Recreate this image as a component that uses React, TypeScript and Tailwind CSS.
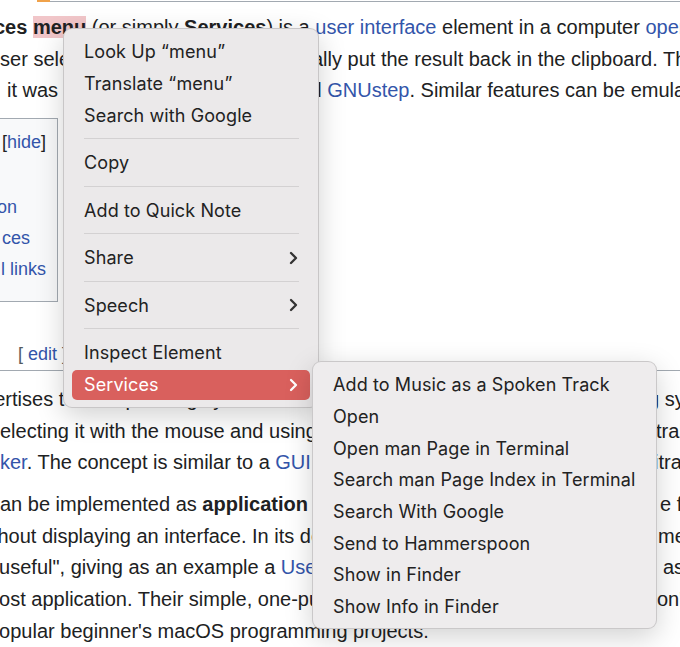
import type { ReactNode } from "react";

function A({ children }: { children: ReactNode }) {
  return <span className="text-[#3355aa]">{children}</span>;
}

function Chevron({ className = "" }: { className?: string }) {
  return (
    <svg width="9" height="14" viewBox="0 0 9 14" fill="none" className={className}>
      <path d="M2 2l5 5-5 5" stroke="currentColor" strokeWidth="2.3" strokeLinecap="round" strokeLinejoin="round" />
    </svg>
  );
}

function Item({ label, sub = false, active = false }: { label: string; sub?: boolean; active?: boolean }) {
  return (
    <div className="h-8 px-2 flex items-center">
      <div
        className={`flex-1 h-[30px] rounded-[5px] pl-[12px] pr-[12px] flex items-center justify-between ${
          active ? "bg-[#d9605d] text-white" : "text-[#222222]"
        }`}
      >
        <span>{label}</span>
        {sub && <Chevron className={active ? "text-white" : "text-[#333333]"} />}
      </div>
    </div>
  );
}

function Sep() {
  return (
    <div className="h-[15.5px] flex items-center pl-[20px] pr-[19px]">
      <div className="h-px flex-1 bg-[#d3d1d2]" />
    </div>
  );
}

function SubItem({ label }: { label: string }) {
  return <div className="h-[31.7px] flex items-center pl-[20px] text-[#222222] whitespace-nowrap">{label}</div>;
}

const line = "h-[31.6px] leading-[31.6px] whitespace-nowrap flex";

export default function App() {
  return (
    <div className="relative w-[680px] h-[647px] overflow-hidden bg-white text-[#202122] text-[20px] font-['Liberation_Sans',Arial,sans-serif]">
      {/* page behind the menus */}
      <div className="flex h-[2px]">
        <div className="w-[37px]" />
        <div className="w-[13px] bg-[#f0a24a]" />
        <div className="flex-1 border-b border-[#a2a9b1]" />
      </div>

      <div className="mt-[10.2px]">
        <div className={line}>
          <div className="ml-[-6px]">
            <b>ces </b>
            <b className="bg-[#f1c6c9]">menu</b> (or simply <b>Services</b>) is a <A>user interface</A> element in a
            computer <A>operating system</A>
          </div>
        </div>
        <div className={line}>
          <div className="w-[312px] shrink-0 overflow-hidden">
            <div className="ml-[-11px]">user selects text</div>
          </div>
          <div>ally put the result back in the clipboard. The</div>
        </div>
        <div className={line}>
          <div className="w-[310.5px] shrink-0 overflow-hidden">
            <div className="pl-[7px]">it was</div>
          </div>
          <div>
            d <A>GNUstep</A>. Similar features can be emulated
          </div>
        </div>
      </div>

      <div className="mt-[11px] ml-[-10px] w-[68px] border border-[#a2a9b1] bg-[#f8f9fa] pt-[8.5px] pb-[15.5px] text-[18px] whitespace-nowrap text-right">
        <div className="h-[31px] leading-[31px] pr-[11px]">
          [<A>hide</A>]
        </div>
        <div className="mt-[3px] text-[#3355aa]">
          <div className="h-[31px] leading-[31px]" />
          <div className="h-[31px] leading-[31px] pr-[40px]">on</div>
          <div className="h-[31px] leading-[31px] pr-[27px]">ces</div>
          <div className="h-[31px] leading-[31px] pr-[11px]">l links</div>
        </div>
      </div>

      <div className="mt-[37.5px] h-[32px] border-b border-[#a2a9b1] flex items-center pl-[18px] text-[18px] text-[#54595d]">
        [ <A>&nbsp;edit&nbsp;</A> ]
      </div>

      <div className="mt-[12.7px]">
        <div className={line}>
          <div className="w-[648px] shrink-0 overflow-hidden">
            <div className="ml-[-38px]">advertises to the operating system the data types it can handle on the operatin</div>
          </div>
          <div>g system</div>
        </div>
        <div className={line}>
          <div className="w-[656px] shrink-0 overflow-hidden">
            <div className="ml-[-10px]">selecting it with the mouse and using a menu item in the cen</div>
          </div>
          <div>tral menu</div>
        </div>
        <div className={line}>
          <div className="w-[654px] shrink-0 overflow-hidden">
            <div>
              <A>ker</A>. The concept is similar to a <A>GUI</A> widget that handles arb
            </div>
          </div>
          <div>itrary</div>
        </div>
      </div>

      <div className="mt-[10.2px]">
        <div className={line}>
          <div className="w-[660px] shrink-0 overflow-hidden">
            <div className="ml-[-10px]">
              can be implemented as <b>application</b> services that run in the background
            </div>
          </div>
          <div>e functions</div>
        </div>
        <div className={line}>
          <div className="w-[658px] shrink-0 overflow-hidden">
            <div className="ml-[-27px]">without displaying an interface. In its documentation, Apple reco</div>
          </div>
          <div>mends</div>
        </div>
        <div className={line}>
          <div className="w-[663px] shrink-0 overflow-hidden">
            <div className="ml-[-8px]">
              "useful", giving as an example a <A>User</A> defaults service, such
            </div>
          </div>
          <div>as</div>
        </div>
        <div className={line}>
          <div className="w-[657px] shrink-0 overflow-hidden">
            <div className="ml-[-12px]">host application. Their simple, one-purpose nature means they d</div>
          </div>
          <div>on't</div>
        </div>
        <div className={line}>
          <div className="ml-[-12px]">popular beginner's macOS programming projects.</div>
        </div>
      </div>

      {/* context menu */}
      <div className="absolute left-[63px] top-[28px] w-[256px] rounded-[9px] bg-[#ebe9ea] border border-black/15 shadow-[0_8px_28px_rgba(0,0,0,0.18)] pt-[6px] pb-[6px] text-[18px] tracking-[0.1px] font-['Inter',sans-serif]">
        <Item label="Look Up “menu”" />
        <Item label="Translate “menu”" />
        <Item label="Search with Google" />
        <Sep />
        <Item label="Copy" />
        <Sep />
        <Item label="Add to Quick Note" />
        <Sep />
        <Item label="Share" sub />
        <Sep />
        <Item label="Speech" sub />
        <Sep />
        <Item label="Inspect Element" />
        <Item label="Services" sub active />
      </div>

      {/* services submenu */}
      <div className="absolute left-[312px] top-[361px] w-[345px] rounded-[9px] bg-[#eeeced] border border-black/15 shadow-[0_8px_28px_rgba(0,0,0,0.18)] pt-[7px] pb-[5px] text-[18px] tracking-[0.1px] font-['Inter',sans-serif]">
        <SubItem label="Add to Music as a Spoken Track" />
        <SubItem label="Open" />
        <SubItem label="Open man Page in Terminal" />
        <SubItem label="Search man Page Index in Terminal" />
        <SubItem label="Search With Google" />
        <SubItem label="Send to Hammerspoon" />
        <SubItem label="Show in Finder" />
        <SubItem label="Show Info in Finder" />
      </div>
    </div>
  );
}
